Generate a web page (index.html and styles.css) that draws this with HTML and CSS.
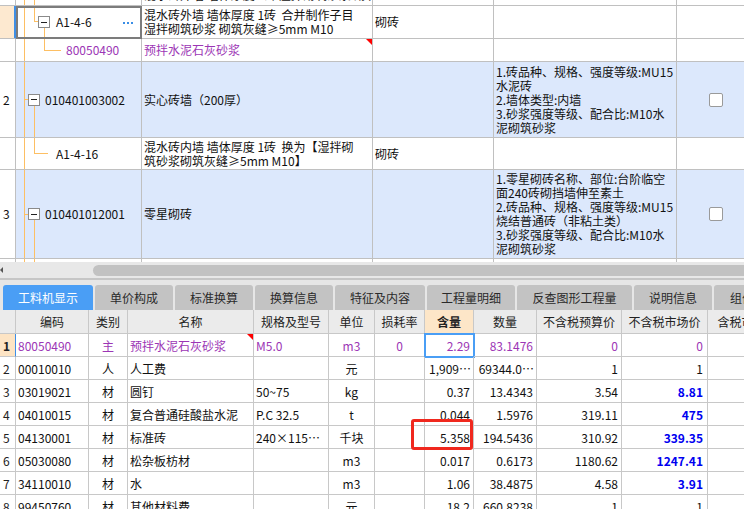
FILE: index.html
```html
<!DOCTYPE html>
<html lang="zh-CN">
<head>
<meta charset="utf-8">
<title>工料机显示</title>
<link rel="stylesheet" href="styles.css">
</head>
<body>
<div class="app">
  <div class="top">
    <div class="trow r0">
      <div class="num"></div>
      <div class="code c0"></div>
      <div class="name bottom"><span>混水砖外墙 墙体厚度 1砖 湿拌砌筑砂浆 砌筑灰缝</span></div>
      <div></div><div></div><div></div>
    </div>
    <div class="trow r1">
      <div class="num selnum"></div>
      <div class="code c1 selcell"><span class="tog"></span><span>A1-4-6</span><span class="more"></span></div>
      <div class="name"><span>混水砖外墙 墙体厚度 1砖&nbsp;&nbsp;合并制作子目<br>湿拌砌筑砂浆 砌筑灰缝≥5mm M10</span></div>
      <div>砌砖</div><div></div><div></div>
    </div>
    <div class="trow r2">
      <div class="num"></div>
      <div class="code c2 purple">80050490</div>
      <div class="name purple mark">预拌水泥石灰砂浆</div>
      <div></div><div></div><div></div>
    </div>
    <div class="trow r3 blue">
      <div class="num">2</div>
      <div class="code c3"><span class="tog"></span><span>010401003002</span></div>
      <div class="name">实心砖墙（200厚）</div>
      <div></div>
      <div class="feat"><span>1.砖品种、规格、强度等级:MU15<br>水泥砖<br>2.墙体类型:内墙<br>3.砂浆强度等级、配合比:M10水<br>泥砌筑砂浆</span></div>
      <div class="ck"><span class="chk"></span></div>
    </div>
    <div class="trow r4">
      <div class="num"></div>
      <div class="code c4">A1-4-16</div>
      <div class="name"><span>混水砖内墙 墙体厚度 1砖&nbsp;&nbsp;换为【湿拌砌<br>筑砂浆砌筑灰缝≥5mm M10】</span></div>
      <div>砌砖</div><div></div><div></div>
    </div>
    <div class="trow r5 blue">
      <div class="num">3</div>
      <div class="code c5"><span class="tog"></span><span>010401012001</span></div>
      <div class="name">零星砌砖</div>
      <div></div>
      <div class="feat"><span>1.零星砌砖名称、部位:台阶临空<br>面240砖砌挡墙伸至素土<br>2.砖品种、规格、强度等级:MU15<br>烧结普通砖（非粘土类）<br>3.砂浆强度等级、配合比:M10水<br>泥砌筑砂浆</span></div>
      <div class="ck"><span class="chk"></span></div>
    </div>
    <div class="trow r6">
      <div class="num"></div>
      <div class="code c0"></div>
      <div class="name toptext"><span>零星砌砖 砌筑砂浆 砖砌体</span></div>
      <div></div><div></div><div></div>
    </div>
  </div>

  <div class="hscroll"><span class="arrow"></span><span class="thumb"></span></div>
  <div class="divider"></div>

  <div class="tabs">
    <div class="tab t1 active">工料机显示</div>
    <div class="tab t2">单价构成</div>
    <div class="tab t3">标准换算</div>
    <div class="tab t4">换算信息</div>
    <div class="tab t5">特征及内容</div>
    <div class="tab t6">工程量明细</div>
    <div class="tab t7">反查图形工程量</div>
    <div class="tab t8">说明信息</div>
    <div class="tab t9">组价方案</div>
  </div>

  <div class="grid">
    <div class="grow head">
      <div></div>
      <div>编码</div>
      <div>类别</div>
      <div>名称</div>
      <div>规格及型号</div>
      <div>单位</div>
      <div>损耗率</div>
      <div class="hl">含量</div>
      <div>数量</div>
      <div>不含税预算价</div>
      <div>不含税市场价</div>
      <div>含税市场价</div>
    </div>
    <div class="grow sel purple">
      <div class="rn selrn">1</div>
      <div>80050490</div>
      <div class="c">主</div>
      <div class="mark">预拌水泥石灰砂浆</div>
      <div>M5.0</div>
      <div class="c">m3</div>
      <div class="c">0</div>
      <div class="r cur">2.29</div>
      <div class="r">83.1476</div>
      <div class="r">0</div>
      <div class="r mk">0</div>
      <div></div>
    </div>
    <div class="grow">
      <div class="rn">2</div>
      <div>00010010</div>
      <div class="c">人</div>
      <div>人工费</div>
      <div></div>
      <div class="c">元</div>
      <div class="c"></div>
      <div class="r">1,909<span class="ell">…</span></div>
      <div class="r">69344.0<span class="ell">…</span></div>
      <div class="r">1</div>
      <div class="r mk">1</div>
      <div></div>
    </div>
    <div class="grow">
      <div class="rn">3</div>
      <div>03019021</div>
      <div class="c">材</div>
      <div>圆钉</div>
      <div>50~75</div>
      <div class="c">kg</div>
      <div class="c"></div>
      <div class="r">0.37</div>
      <div class="r">13.4343</div>
      <div class="r">3.54</div>
      <div class="r mk bb">8.81</div>
      <div></div>
    </div>
    <div class="grow">
      <div class="rn">4</div>
      <div>04010015</div>
      <div class="c">材</div>
      <div>复合普通硅酸盐水泥</div>
      <div>P.C 32.5</div>
      <div class="c">t</div>
      <div class="c"></div>
      <div class="r">0.044</div>
      <div class="r">1.5976</div>
      <div class="r">319.11</div>
      <div class="r mk bb">475</div>
      <div></div>
    </div>
    <div class="grow">
      <div class="rn">5</div>
      <div>04130001</div>
      <div class="c">材</div>
      <div>标准砖</div>
      <div>240×115<span class="ell">…</span></div>
      <div class="c">千块</div>
      <div class="c"></div>
      <div class="r">5.358</div>
      <div class="r">194.5436</div>
      <div class="r">310.92</div>
      <div class="r mk bb">339.35</div>
      <div></div>
    </div>
    <div class="grow">
      <div class="rn">6</div>
      <div>05030080</div>
      <div class="c">材</div>
      <div>松杂板枋材</div>
      <div></div>
      <div class="c">m3</div>
      <div class="c"></div>
      <div class="r">0.017</div>
      <div class="r">0.6173</div>
      <div class="r">1180.62</div>
      <div class="r mk bb">1247.41</div>
      <div></div>
    </div>
    <div class="grow">
      <div class="rn">7</div>
      <div>34110010</div>
      <div class="c">材</div>
      <div>水</div>
      <div></div>
      <div class="c">m3</div>
      <div class="c"></div>
      <div class="r">1.06</div>
      <div class="r">38.4875</div>
      <div class="r">4.58</div>
      <div class="r mk bb">3.91</div>
      <div></div>
    </div>
    <div class="grow">
      <div class="rn">8</div>
      <div>99450760</div>
      <div class="c">材</div>
      <div>其他材料费</div>
      <div></div>
      <div class="c">元</div>
      <div class="c"></div>
      <div class="r">18.2</div>
      <div class="r">660.8238</div>
      <div class="r">1</div>
      <div class="r mk">1</div>
      <div></div>
    </div>
  </div>

  <div class="annot"></div>
</div>
</body>
</html>
```

FILE: styles.css
```css
* { box-sizing: border-box; }
body {
  margin: 0;
  font-family: "Noto Sans CJK SC", "Liberation Sans", sans-serif;
  font-size: 12px;
  color: #111;
  background: #fff;
}
.app {
  width: 744px;
  height: 509px;
  overflow: hidden;
  position: relative;
  background: #fff;
}

/* ---------- top table ---------- */
.top {
  height: 262px;
  overflow: hidden;
}
.trow {
  display: grid;
  grid-template-columns: 16px 126px 231px 121px 183px 67px;
}
.trow > div {
  border-right: 1px solid #c0c0c0;
  border-bottom: 1px solid #c0c0c0;
  display: flex;
  align-items: center;
  padding-left: 2px;
  overflow: hidden;
  white-space: nowrap;
  line-height: 14px;
  position: relative;
}
.trow > div:last-child { border-right: none; }
.r0 { height: 6px; }
.r1 { height: 33px; }
.r2 { height: 23px; }
.r3 { height: 76px; }
.r4 { height: 32px; }
.r5 { height: 89px; }
.r6 { height: 20px; }
.r6 > div { border-bottom: none; }
.blue > div { background-color: #dce8fc; }
.blue > .num { background-color: #fff; }
.trow > .num { padding-left: 3px; }
.selnum {
  background: #fde9d0;
  box-shadow: inset -1px 0 0 #3f8fe6;
}
.trow > .selnum { border-right-color: #3f8fe6; }
.selcell {
  outline: 2px solid #7c7c7c;
  outline-offset: -2px;
}
.trow > .bottom { align-items: flex-end; }
.bottom span { margin-bottom: 3px; }
.trow > .toptext { align-items: flex-start; padding-top: 3px; }

.purple { color: #9c36b5; }

.code { --t: #fdbf63; }
.c0 {
  background:
    linear-gradient(var(--t), var(--t)) 8px 0 / 1px 100% no-repeat,
    linear-gradient(var(--t), var(--t)) 18px 0 / 1px 100% no-repeat;
}
.trow > .c1 {
  padding-left: 22px;
  background:
    linear-gradient(var(--t), var(--t)) 8px 0 / 1px 100% no-repeat,
    linear-gradient(var(--t), var(--t)) 18px 0 / 1px 16px no-repeat,
    linear-gradient(var(--t), var(--t)) 18px 15px / 4px 1px no-repeat,
    linear-gradient(var(--t), var(--t)) 28px 21px / 1px 100% no-repeat;
}
.c1 .tog { margin-right: 6px; }
.more {
  margin-left: auto;
  margin-right: 8px;
  margin-top: 2px;
  width: 10px;
  height: 2px;
  background: linear-gradient(90deg, #3a8ee6 0 2px, transparent 2px 4px) 0 0 / 4px 2px repeat-x;
}
.trow > .c2 {
  padding-left: 50px;
  background:
    linear-gradient(var(--t), var(--t)) 8px 0 / 1px 100% no-repeat,
    linear-gradient(var(--t), var(--t)) 28px 0 / 1px 12px no-repeat,
    linear-gradient(var(--t), var(--t)) 28px 11px / 17px 1px no-repeat;
}
.trow > .c3 {
  padding-left: 12px;
  background-color: #dce8fc;
  background-image:
    linear-gradient(var(--t), var(--t)),
    linear-gradient(var(--t), var(--t)),
    linear-gradient(var(--t), var(--t));
  background-repeat: no-repeat;
  background-position: 8px 0, 8px 37px, 18px 43px;
  background-size: 1px 100%, 4px 1px, 1px 100%;
}
.trow > .c4 {
  padding-left: 40px;
  background:
    linear-gradient(var(--t), var(--t)) 8px 0 / 1px 100% no-repeat,
    linear-gradient(var(--t), var(--t)) 18px 0 / 1px 16px no-repeat,
    linear-gradient(var(--t), var(--t)) 18px 15px / 14px 1px no-repeat;
}
.trow > .c5 {
  padding-left: 12px;
  background-color: #dce8fc;
  background-image:
    linear-gradient(var(--t), var(--t)),
    linear-gradient(var(--t), var(--t)),
    linear-gradient(var(--t), var(--t));
  background-repeat: no-repeat;
  background-position: 8px 0, 8px 44px, 18px 50px;
  background-size: 1px 100%, 4px 1px, 1px 100%;
}
.c3 .tog, .c5 .tog { margin-right: 5px; }
.tog {
  flex: none;
  width: 12px;
  height: 12px;
  border: 1px solid #8a8a8a;
  background: #fff;
  display: flex;
  align-items: center;
  justify-content: center;
}
.tog::before {
  content: "";
  width: 6px;
  height: 1px;
  background: #222;
}
.mark::after {
  content: "";
  position: absolute;
  top: 0;
  right: 0;
  border-top: 6px solid #f00;
  border-left: 6px solid transparent;
}
.trow > .ck { padding-left: 0; }
.chk {
  margin-left: 32px;
  width: 14px;
  height: 14px;
  border: 1px solid #9a9a9a;
  border-radius: 2px;
  background: #fff;
}

/* ---------- scrollbar ---------- */
.hscroll {
  height: 16px;
  background: #e8e8e8;
  display: flex;
  align-items: center;
}
.arrow {
  flex: none;
  width: 0;
  height: 0;
  border-top: 3px solid transparent;
  border-bottom: 3px solid transparent;
  border-right: 3px solid #555;
}
.thumb {
  flex: none;
  margin-left: 90px;
  width: 670px;
  height: 11px;
  background: #c2c2c2;
  border-radius: 6px;
}
.divider {
  height: 2px;
  background: #c6c6c6;
}

/* ---------- tabs ---------- */
.tabs {
  height: 30px;
  background: #e6e6e6;
  display: flex;
  align-items: flex-end;
  gap: 2px;
  padding-left: 3px;
  overflow: hidden;
}
.tab {
  flex: none;
  height: 25px;
  background: #c3c3c3;
  border-radius: 3px 3px 0 0;
  display: flex;
  align-items: center;
  justify-content: center;
  color: #2a2a2a;
  font-size: 12px;
  white-space: nowrap;
}
.tab.active { background: #4a9ef5; color: #fff; }
.t1 { width: 90px; }
.t2, .t3, .t4, .t8 { width: 78px; }
.t5 { width: 90px; }
.t6 { width: 88px; }
.t7 { width: 115px; }
.t9 { width: 80px; }

/* ---------- bottom grid ---------- */
.grid {
  width: 744px;
  overflow: hidden;
}
.grow {
  display: grid;
  grid-template-columns: 16px 73px 39px 126px 75px 46px 50px 49px 63px 85px 86px 80px;
  height: 23px;
  width: 788px;
}
.grow > div {
  border-right: 1px solid #c8c8c8;
  border-bottom: 1px solid #c8c8c8;
  display: flex;
  align-items: center;
  padding: 0 2px;
  white-space: nowrap;
  overflow: hidden;
  position: relative;
}
.grow > .c { justify-content: center; }
.grow > .r { justify-content: flex-end; padding-right: 3px; }
.grow > .mk { padding-right: 4px; }
.grow > .rn { padding-left: 3px; color: #222; }
.ell { letter-spacing: -1px; }
.head { height: 24px; background: #ebebeb; }
.head > div { justify-content: center; color: #222; }
.head > .hl { background: #fde6c8; font-weight: bold; }
.grow > .selrn {
  background: #fde4c4;
  font-weight: bold;
  border-right-color: #3d8ee8;
}
.cur {
  outline: 2px solid #4a9ef5;
  outline-offset: -1px;
}
.bb { color: #0000f0; font-weight: bold; }

/* annotation overlay */
.annot {
  position: absolute;
  left: 411px;
  top: 419px;
  width: 62px;
  height: 31px;
  border: 3px solid #f0281e;
  border-radius: 3px;
}
```
